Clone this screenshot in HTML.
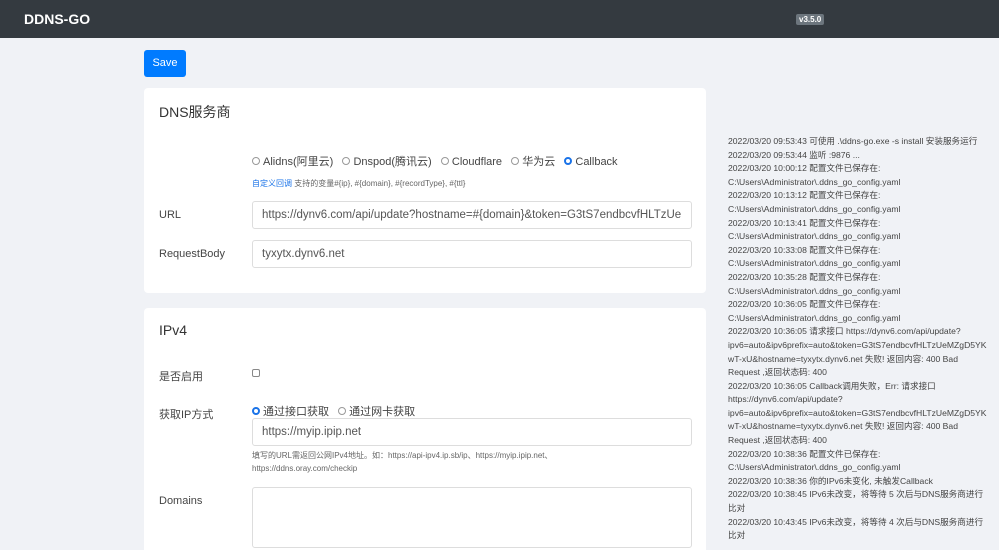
<!DOCTYPE html>
<html style="overflow:hidden;width:999px;height:550px"><head><meta charset="utf-8"><style>
*{box-sizing:border-box;margin:0;padding:0}
body{width:999px;height:550px;overflow:hidden;background:#f0f2f6;font-family:"Liberation Sans","Noto Sans CJK SC",sans-serif;color:#333;position:relative}
.hdr{height:38px;background:#343a40;position:relative}
.hdr .t{position:absolute;left:24px;top:11px;color:#fff;font-weight:bold;font-size:14px}
.hdr .v{position:absolute;left:796px;top:14px;background:#6c757d;color:#fff;font-size:8px;font-weight:bold;padding:1px 3px;border-radius:2px}
.save{position:absolute;left:144px;top:50px;width:42px;height:27px;background:#007bff;color:#fff;border-radius:3px;font-size:11px;line-height:27px;text-align:center}
.card{position:absolute;left:144px;width:562px;background:#fff;border-radius:4px}
.h{position:absolute;left:15px;font-size:14px;color:#333}
.lbl{position:absolute;left:15px;font-size:11px;color:#444}
.inp{position:absolute;left:108px;width:440px;height:28px;border:1px solid #ddd;border-radius:3px;font-size:11.5px;color:#555;padding:0 0 0 9px;line-height:26px;white-space:nowrap;overflow:hidden}
.rad{display:inline-block;width:8px;height:8px;border:1px solid #999;border-radius:50%;margin-right:3px;vertical-align:-0px}
.rad.on{border:2.5px solid #1a73e8;background:#fff}
.row{position:absolute;left:108px;font-size:11px;color:#444;white-space:nowrap}
.small{position:absolute;left:108px;font-size:8px;color:#666;line-height:13px}
.log{position:absolute;left:728px;top:135px;width:271px;font-size:8.6px;color:#444;white-space:nowrap;overflow:hidden}
.log div{height:13.6px;line-height:13px;overflow:visible}
</style></head><body>
<div class="hdr"><div class="t">DDNS-GO</div><div class="v">v3.5.0</div></div>
<div class="save">Save</div>
<div class="card" style="top:88px;height:205px">
<div class="h" style="top:14px">DNS服务商</div>
<div class="row" style="top:65px"><span class="rad"></span>Alidns(阿里云) &nbsp; <span class="rad"></span>Dnspod(腾讯云) &nbsp; <span class="rad"></span>Cloudflare &nbsp; <span class="rad"></span>华为云 &nbsp; <span class="rad on"></span>Callback</div>
<div class="small" style="top:89px"><span style="color:#1a73e8">自定义回调</span> 支持的变量#{ip}, #{domain}, #{recordType}, #{ttl}</div>
<div class="lbl" style="top:121px">URL</div>
<div class="inp" style="top:113px">https://dynv6.com/api/update?hostname=#{domain}&amp;token=G3tS7endbcvfHLTzUe</div>
<div class="lbl" style="top:160px">RequestBody</div>
<div class="inp" style="top:152px">tyxytx.dynv6.net</div>
</div>
<div class="card" style="top:308px;height:242px;border-radius:4px 4px 0 0">
<div class="h" style="top:14px">IPv4</div>
<div class="lbl" style="top:60px">是否启用</div>
<div style="position:absolute;left:108px;top:61px;width:8px;height:8px;border:1px solid #888;border-radius:2px"></div>
<div class="lbl" style="top:98px">获取IP方式</div>
<div class="row" style="top:95px"><span class="rad on"></span>通过接口获取 &nbsp; <span class="rad"></span>通过网卡获取</div>
<div class="inp" style="top:110px">https://myip.ipip.net</div>
<div class="small" style="top:141px">填写的URL需返回公网IPv4地址。如：https://api-ipv4.ip.sb/ip、https://myip.ipip.net、<br>https://ddns.oray.com/checkip</div>
<div class="lbl" style="top:187px">Domains</div>
<div class="inp" style="top:179px;height:61px"></div>
</div>
<div class="log">
<div>2022/03/20 09:53:43 可使用 .\ddns-go.exe -s install 安装服务运行</div>
<div>2022/03/20 09:53:44 监听 :9876 ...</div>
<div>2022/03/20 10:00:12 配置文件已保存在:</div>
<div>C:\Users\Administrator\.ddns_go_config.yaml</div>
<div>2022/03/20 10:13:12 配置文件已保存在:</div>
<div>C:\Users\Administrator\.ddns_go_config.yaml</div>
<div>2022/03/20 10:13:41 配置文件已保存在:</div>
<div>C:\Users\Administrator\.ddns_go_config.yaml</div>
<div>2022/03/20 10:33:08 配置文件已保存在:</div>
<div>C:\Users\Administrator\.ddns_go_config.yaml</div>
<div>2022/03/20 10:35:28 配置文件已保存在:</div>
<div>C:\Users\Administrator\.ddns_go_config.yaml</div>
<div>2022/03/20 10:36:05 配置文件已保存在:</div>
<div>C:\Users\Administrator\.ddns_go_config.yaml</div>
<div>2022/03/20 10:36:05 请求接口 https://dynv6.com/api/update?</div>
<div>ipv6=auto&amp;ipv6prefix=auto&amp;token=G3tS7endbcvfHLTzUeMZgD5YK</div>
<div>wT-xU&amp;hostname=tyxytx.dynv6.net 失败! 返回内容: 400 Bad</div>
<div>Request ,返回状态码: 400</div>
<div>2022/03/20 10:36:05 Callback调用失败，Err: 请求接口</div>
<div>https://dynv6.com/api/update?</div>
<div>ipv6=auto&amp;ipv6prefix=auto&amp;token=G3tS7endbcvfHLTzUeMZgD5YK</div>
<div>wT-xU&amp;hostname=tyxytx.dynv6.net 失败! 返回内容: 400 Bad</div>
<div>Request ,返回状态码: 400</div>
<div>2022/03/20 10:38:36 配置文件已保存在:</div>
<div>C:\Users\Administrator\.ddns_go_config.yaml</div>
<div>2022/03/20 10:38:36 你的IPv6未变化, 未触发Callback</div>
<div>2022/03/20 10:38:45 IPv6未改变，将等待 5 次后与DNS服务商进行</div>
<div>比对</div>
<div>2022/03/20 10:43:45 IPv6未改变，将等待 4 次后与DNS服务商进行</div>
<div>比对</div>
</div>
</body></html>
